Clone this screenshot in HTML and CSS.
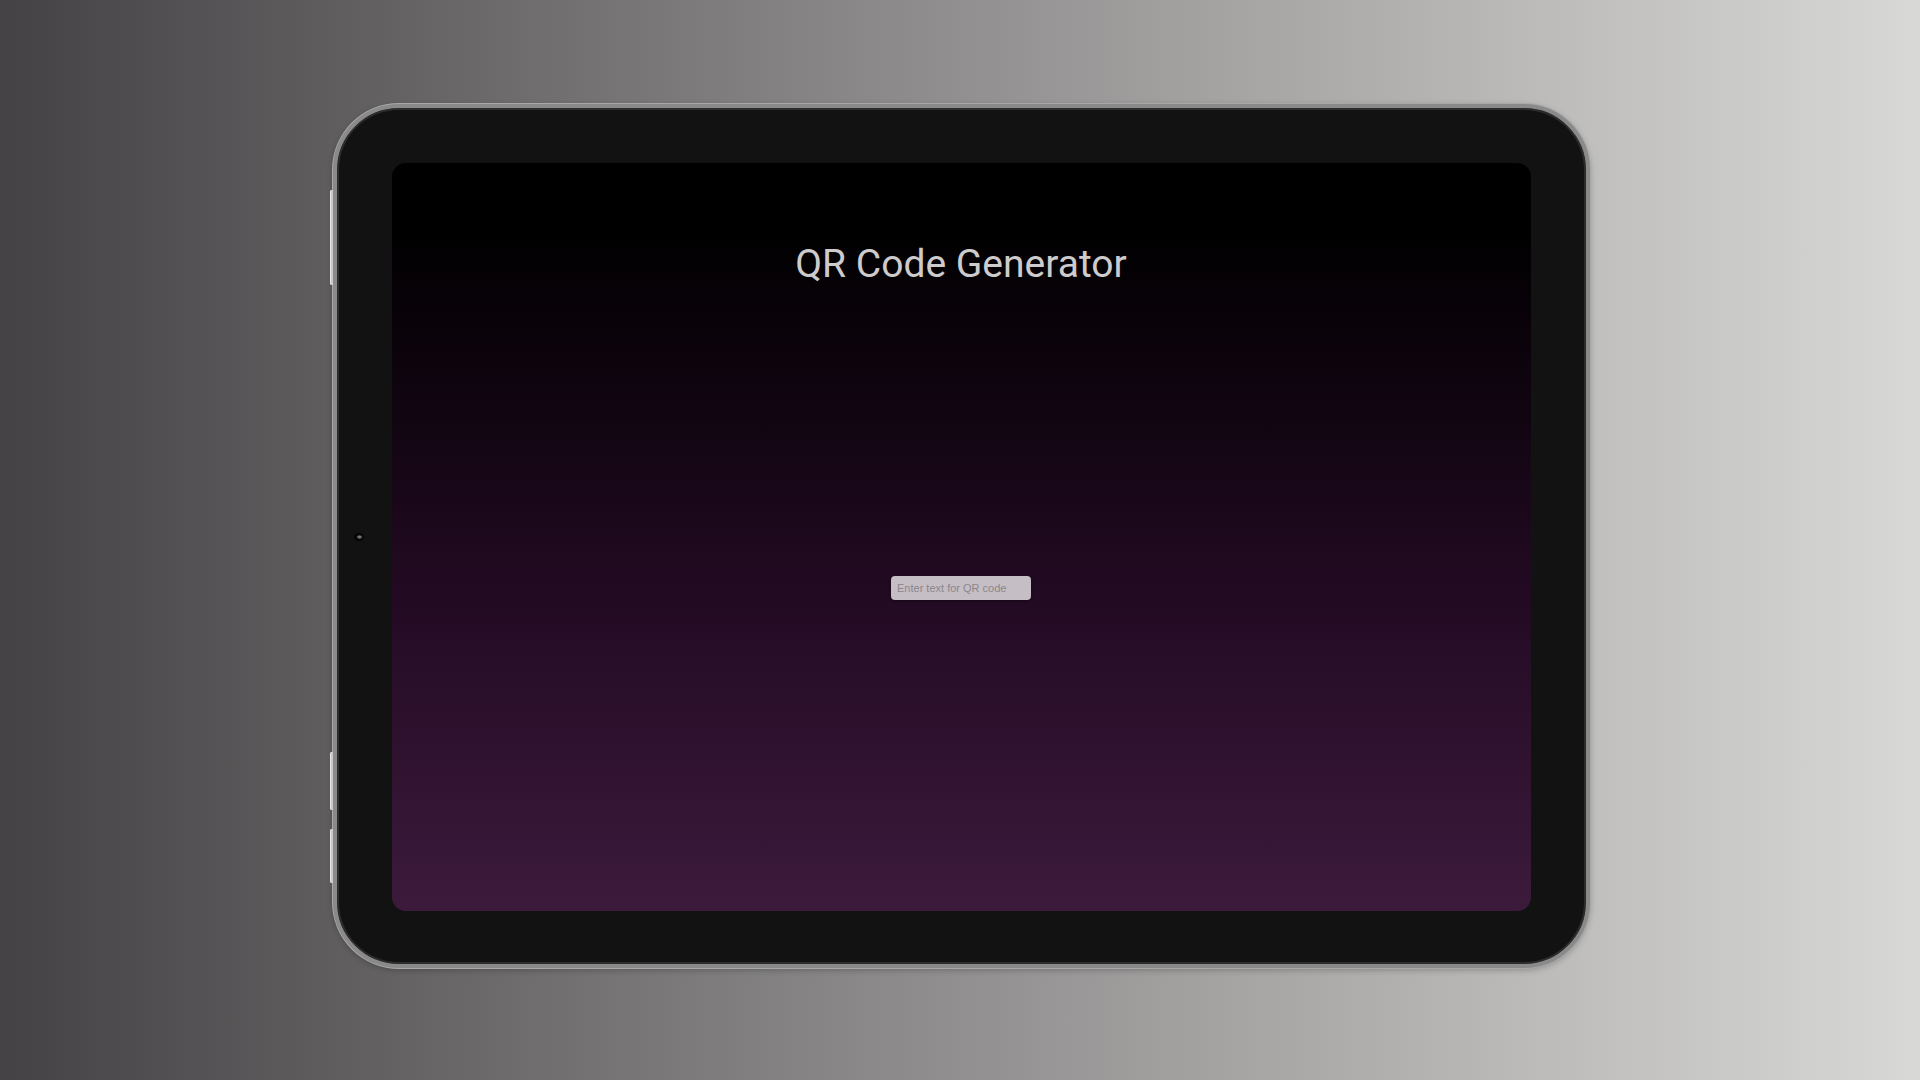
FILE: index.html
```html
<!DOCTYPE html>
<html lang="en">
<head>
<meta charset="utf-8">
<title>QR Code Generator</title>
<link rel="stylesheet" href="styles.css">
</head>
<body>
<div class="stage">
  <div class="tablet">
    <span class="btn btn-top"></span>
    <span class="btn btn-vol1"></span>
    <span class="btn btn-vol2"></span>
    <span class="camera"></span>
    <div class="screen">
      <h1 class="title">QR Code Generator</h1>
      <div class="content">
        <input class="qr-input" type="text" placeholder="Enter text for QR code">
      </div>
    </div>
  </div>
</div>
</body>
</html>
```
FILE: styles.css
```css
html, body {
  margin: 0;
  padding: 0;
  height: 100%;
}
body {
  background: linear-gradient(to right, #444244 0%, #8a8888 45%, #d8d8d6 100%);
  font-family: Roboto, "Liberation Sans", sans-serif;
  overflow: hidden;
}
.stage {
  height: 100vh;
  display: flex;
  align-items: center;
  justify-content: center;
}
.tablet {
  position: relative;
  box-sizing: border-box;
  width: 1257px;
  height: 864px;
  margin-bottom: 8px;
  margin-left: 2px;
  padding: 55px 55px 53px 55px;
  background: #121212;
  border: 4px solid #8a8a8a;
  border-radius: 66px;
  box-shadow: 0 0 0 1px #a8a8a8, inset 0 0 0 2px #2c2c2c, 0 2px 6px rgba(0,0,0,0.25);
  display: flex;
}
.btn {
  position: absolute;
  left: -7px;
  width: 3px;
  background: #c8c8c8;
  border-radius: 2px 0 0 2px;
  box-shadow: inset 1px 0 0 #e6e6e6;
}
.btn-top { top: 82px; height: 95px; }
.btn-vol1 { top: 644px; height: 58px; }
.btn-vol2 { top: 721px; height: 54px; }
.camera {
  position: absolute;
  left: 17px;
  top: 425px;
  width: 10px;
  height: 8px;
  border-radius: 50%;
  background: radial-gradient(ellipse at 55% 50%, #777 0 1.5px, #1a1a1a 2.5px, #030303 4px);
}
.screen {
  flex: 1;
  border-radius: 14px;
  background: linear-gradient(to bottom, #000 8%, #120512 35%, #240b24 60%, #3c1a3b 100%);
  display: flex;
  flex-direction: column;
  align-items: center;
  padding-bottom: 22px;
}
.title {
  margin: 78px 0 0;
  font-family: Roboto, "Liberation Sans", sans-serif;
  font-weight: 400;
  font-size: 39px;
  line-height: 46px;
  color: #cdcbcc;
}
.content {
  flex: 1;
  display: flex;
  align-items: center;
  justify-content: center;
}
.qr-input {
  box-sizing: border-box;
  width: 140px;
  height: 24px;
  border: none;
  border-radius: 4px;
  padding: 0 6px;
  background: #c5bec5;
  font-family: "Liberation Sans", Arial, sans-serif;
  font-size: 11px;
  color: #333;
  box-shadow: 0 1px 3px rgba(0,0,0,0.4);
  outline: none;
}
.qr-input::placeholder {
  color: #8b868b;
}
```
